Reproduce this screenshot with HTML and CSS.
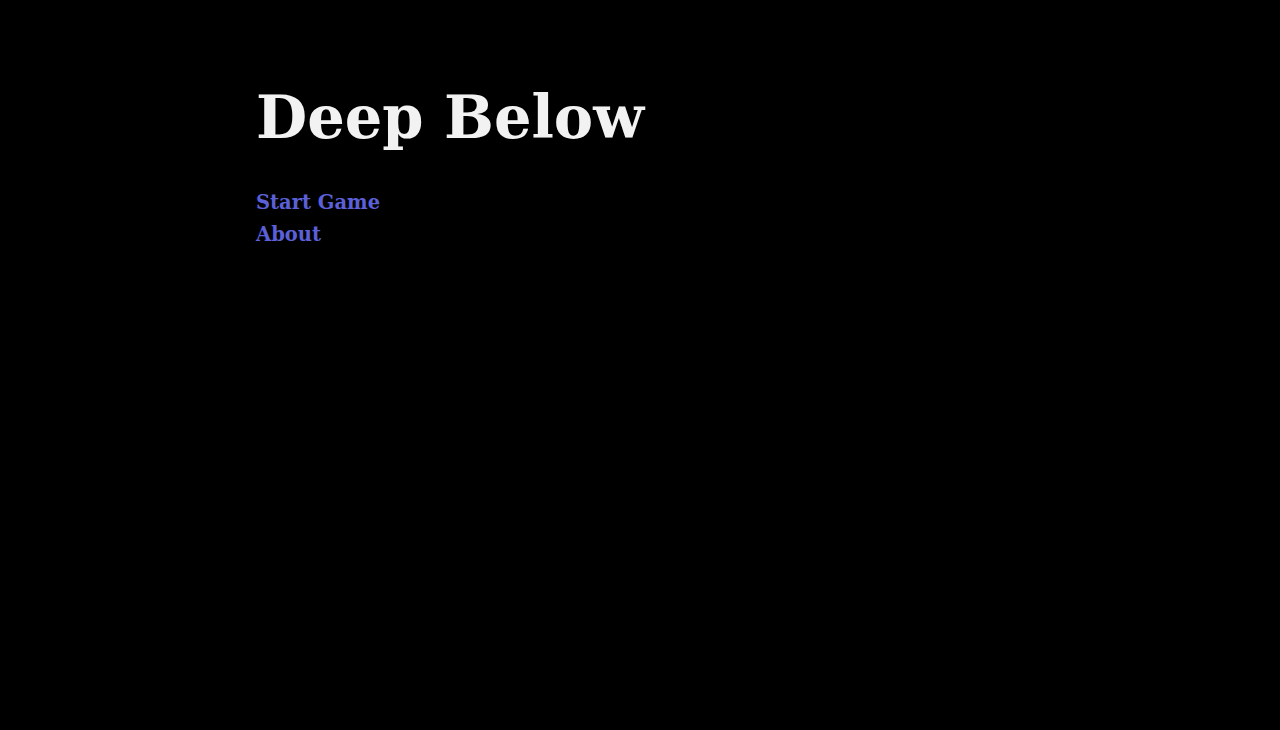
FILE: index.html
```html
<!DOCTYPE html>
<html lang="en">
<head>
<meta charset="utf-8">
<title>Deep Below</title>
<link rel="stylesheet" href="styles.css">
</head>
<body>
<main class="page">
  <h1 class="title">Deep Below</h1>
  <nav class="menu">
    <a class="menu-link" href="#">Start Game</a>
    <a class="menu-link" href="#">About</a>
  </nav>
</main>
</body>
</html>
```

FILE: styles.css
```css
html, body {
  margin: 0;
  padding: 0;
  background: #000;
  height: 100%;
}
body {
  font-family: "DejaVu Serif", Georgia, serif;
}
.page {
  width: 768px;
  margin: 0 auto;
  padding-top: 74px;
}
.title {
  margin: 0;
  color: #f2f2f2;
  font-size: 59px;
  font-weight: bold;
  line-height: 88px;
}
.menu {
  display: flex;
  flex-direction: column;
  margin-top: 25px;
}
.menu-link {
  color: #5b60d8;
  text-decoration: none;
  font-weight: bold;
  font-size: 19.5px;
  line-height: 32px;
}
```
